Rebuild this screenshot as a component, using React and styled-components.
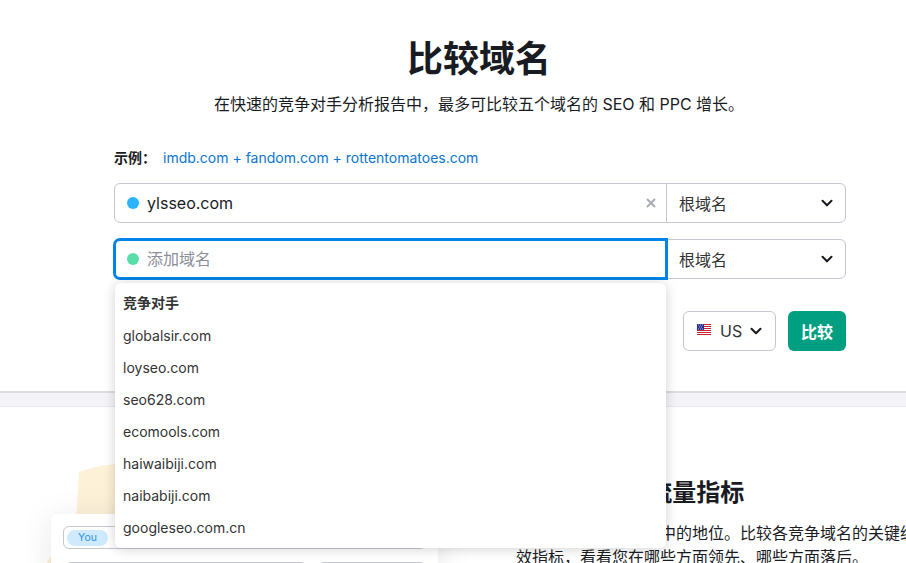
import React from 'react';
import styled, { createGlobalStyle } from 'styled-components';
import { ChevronDown } from 'lucide-react';

const GlobalStyle = createGlobalStyle`
  html,
  body {
    margin: 0;
    height: 563px;
    overflow: hidden;
    background: #fff;
  }
  * {
    box-sizing: border-box;
  }
`;

const Page = styled.div`
  width: 960px;
  height: 563px;
  overflow: hidden;
  color: #191b23;
  font-family: Inter, 'Noto Sans CJK SC', sans-serif;
`;

const Hero = styled.section`
  display: flex;
  flex-direction: column;
  align-items: center;
  padding: 37px 116px 40px 114px;
`;

const Title = styled.h1`
  margin: 0;
  font-size: 36px;
  line-height: 44px;
  font-weight: 700;
`;

const Subtitle = styled.p`
  margin: 11px 0 0;
  font-size: 16px;
  line-height: 24px;
`;

const Form = styled.div`
  align-self: flex-start;
  width: 732px;
  margin-top: 29px;
`;

const Example = styled.div`
  display: flex;
  align-items: center;
  gap: 7px;
  height: 24px;
  margin-bottom: 14px;
  font-size: 14px;
`;

const ExampleLabel = styled.span`
  font-weight: 700;
`;

const ExampleLink = styled.a`
  color: #0a74d0;
  text-decoration: none;
`;

const Row = styled.div`
  position: relative;
  display: flex;
  height: 40px;
  margin-bottom: 16px;
`;

const Field = styled.div`
  position: relative;
  z-index: ${(p) => (p.$focused ? 1 : 0)};
  flex: 1;
  display: flex;
  align-items: center;
  gap: 8px;
  padding: 0 ${(p) => (p.$focused ? '11px' : '12px')};
  background: #fff;
  border: ${(p) => (p.$focused ? '2px solid #0084e8' : '1px solid #c4c7cf')};
  border-radius: 6px 0 0 6px;
  box-shadow: ${(p) => (p.$focused ? '0 0 0 1px #0084e8' : 'none')};
  font-size: 16px;
`;

const Dot = styled.span`
  width: 12px;
  height: 12px;
  border-radius: 50%;
  background: ${(p) => p.$color};
`;

const FieldText = styled.span`
  flex: 1;
  margin-top: ${(p) => (p.$placeholder ? '-3px' : '-1px')};
  color: ${(p) => (p.$placeholder ? '#8b8e99' : '#191b23')};
`;

const ClearIcon = styled.svg`
  width: 10px;
  height: 10px;
  margin-right: -2px;
  stroke: #a9abb6;
  stroke-width: 2;
  fill: none;
`;

const TypeSelect = styled.div`
  width: 180px;
  margin-left: -1px;
  display: flex;
  align-items: center;
  justify-content: space-between;
  padding: 0 9px 0 12px;
  border: 1px solid #c4c7cf;
  border-radius: 0 6px 6px 0;
  font-size: 16px;
  color: #333;
`;

const Suggestions = styled.div`
  position: absolute;
  z-index: 2;
  top: 44px;
  left: 1px;
  width: 551px;
  height: 265px;
  padding: 4px 8px;
  background: #fff;
  border-radius: 6px;
  box-shadow: 0 1px 12px rgba(25, 27, 35, 0.2);
`;

const SuggestionHead = styled.div`
  height: 33px;
  line-height: 32px;
  font-size: 14px;
  font-weight: 700;
  color: #333;
`;

const Suggestion = styled.div`
  height: 32px;
  line-height: 32px;
  font-size: 14px;
  color: #333;
`;

const Actions = styled.div`
  display: flex;
  justify-content: flex-end;
  gap: 12px;
  margin-top: 32px;
`;

const CountrySelect = styled.div`
  width: 93px;
  height: 40px;
  display: flex;
  align-items: center;
  padding-left: 13px;
  border: 1px solid #c4c7cf;
  border-radius: 6px;
  font-size: 16px;
  color: #333;
`;

const Flag = styled.svg`
  width: 14px;
  height: 11px;
  margin: -3px 9px 0 0;
`;

const CountryName = styled.span`
  margin-right: 5px;
`;

const Compare = styled.button`
  width: 58px;
  height: 40px;
  padding: 0;
  border: 0;
  border-radius: 6px;
  background: #009f81;
  color: #fff;
  font: 700 16px Inter, 'Noto Sans CJK SC', sans-serif;
`;

const Band = styled.div`
  height: 16px;
  background: #f4f4f8;
  border-top: 2px solid #dcdde3;
  border-bottom: 1px solid #e8e9ee;
`;

const Feature = styled.section`
  display: grid;
  grid-template-columns: 516px 1fr;
`;

const Illustration = styled.div`
  position: relative;
  height: 157px;
`;

const Blob = styled.svg`
  position: absolute;
  top: 0;
  left: 0;
  width: 516px;
  height: 157px;
`;

const MockCard = styled.div`
  position: absolute;
  top: 107px;
  left: 51px;
  width: 387px;
  height: 120px;
  padding: 12px;
  background: #fff;
  border-radius: 6px;
  box-shadow: 0 4px 32px rgba(25, 27, 35, 0.1);
`;

const MockRow = styled.div`
  display: flex;
  align-items: center;
  width: 363px;
  height: 23px;
  padding-left: 3px;
  border: 1px solid #c4c7cf;
  border-radius: 6px;
`;

const YouPill = styled.span`
  width: 41px;
  height: 16px;
  border-radius: 8px;
  background: #cfeaff;
  color: #2b94e8;
  font-size: 10.5px;
  line-height: 16px;
  text-align: center;
`;

const MockInputs = styled.div`
  display: flex;
  gap: 11px;
  margin: 13px 0 0 2px;
`;

const MockBox = styled.div`
  display: flex;
  width: ${(p) => p.$width}px;
  height: 24px;
  border: 1px solid #c4c7cf;
  border-radius: 6px;
`;

const MockCell = styled.div`
  width: 158px;
  border-right: 1px solid #c4c7cf;
`;

const FeatureText = styled.div`
  padding-top: 70px;
`;

const FeatureTitle = styled.h2`
  margin: 0;
  font-size: 24px;
  line-height: 32px;
  font-weight: 700;
  white-space: nowrap;
`;

const FeatureBody = styled.p`
  margin: 12px 0 0;
  font-size: 16px;
  line-height: 24px;
  white-space: nowrap;
`;

const competitors = [
  'globalsir.com',
  'loyseo.com',
  'seo628.com',
  'ecomools.com',
  'haiwaibiji.com',
  'naibabiji.com',
  'googleseo.com.cn',
];

const UsFlag = () => (
  <Flag viewBox="0 0 14 11">
    <rect width="14" height="11" fill="#fff" />
    {[0, 2, 4, 6, 8, 10].map((y) => (
      <rect key={y} y={y} width="14" height="1" fill="#c8202f" />
    ))}
    <rect width="7" height="6" fill="#2a2f8f" />
    <path
      d="M1 1h1M3 1h1M5 1h1M2 3h1M4 3h1M1 5h1M3 5h1M5 5h1"
      stroke="#b9bbe6"
      strokeWidth="1"
    />
  </Flag>
);

const Chevron = () => (
  <ChevronDown size={18} strokeWidth={2.75} color="#191b23" />
);

const App = () => {
  return (
    <Page>
      <GlobalStyle />
      <Hero>
        <Title>比较域名</Title>
        <Subtitle>
          在快速的竞争对手分析报告中，最多可比较五个域名的 SEO 和 PPC 增长。
        </Subtitle>
        <Form>
          <Example>
            <ExampleLabel>示例：</ExampleLabel>
            <ExampleLink href="#">
              imdb.com + fandom.com + rottentomatoes.com
            </ExampleLink>
          </Example>
          <Row>
            <Field>
              <Dot $color="#2bb3ff" />
              <FieldText>ylsseo.com</FieldText>
              <ClearIcon viewBox="0 0 10 10">
                <path d="M1 1l8 8M9 1l-8 8" />
              </ClearIcon>
            </Field>
            <TypeSelect>
              根域名
              <Chevron />
            </TypeSelect>
          </Row>
          <Row>
            <Field $focused>
              <Dot $color="#59ddaa" />
              <FieldText $placeholder>添加域名</FieldText>
            </Field>
            <TypeSelect>
              根域名
              <Chevron />
            </TypeSelect>
            <Suggestions>
              <SuggestionHead>竞争对手</SuggestionHead>
              {competitors.map((name) => (
                <Suggestion key={name}>{name}</Suggestion>
              ))}
            </Suggestions>
          </Row>
          <Actions>
            <CountrySelect>
              <UsFlag />
              <CountryName>US</CountryName>
              <Chevron />
            </CountrySelect>
            <Compare>比较</Compare>
          </Actions>
        </Form>
      </Hero>
      <Band />
      <Feature>
        <Illustration>
          <Blob viewBox="0 0 516 157">
            <path
              d="M79 65Q100 57 130 56L400 56L400 157L46 157L52 147L76 114Z"
              fill="#fdf1d8"
            />
          </Blob>
          <MockCard>
            <MockRow>
              <YouPill>You</YouPill>
            </MockRow>
            <MockInputs>
              <MockBox $width={242}>
                <MockCell />
              </MockBox>
              <MockBox $width={108} />
            </MockInputs>
          </MockCard>
        </Illustration>
        <FeatureText>
          <FeatureTitle>比较 PPC 的流量指标</FeatureTitle>
          <FeatureBody>
            了解您在竞争环境之中的地位。比较各竞争域名的关键绩
            <br />
            效指标，看看您在哪些方面领先、哪些方面落后。
          </FeatureBody>
        </FeatureText>
      </Feature>
    </Page>
  );
};

export default App;
